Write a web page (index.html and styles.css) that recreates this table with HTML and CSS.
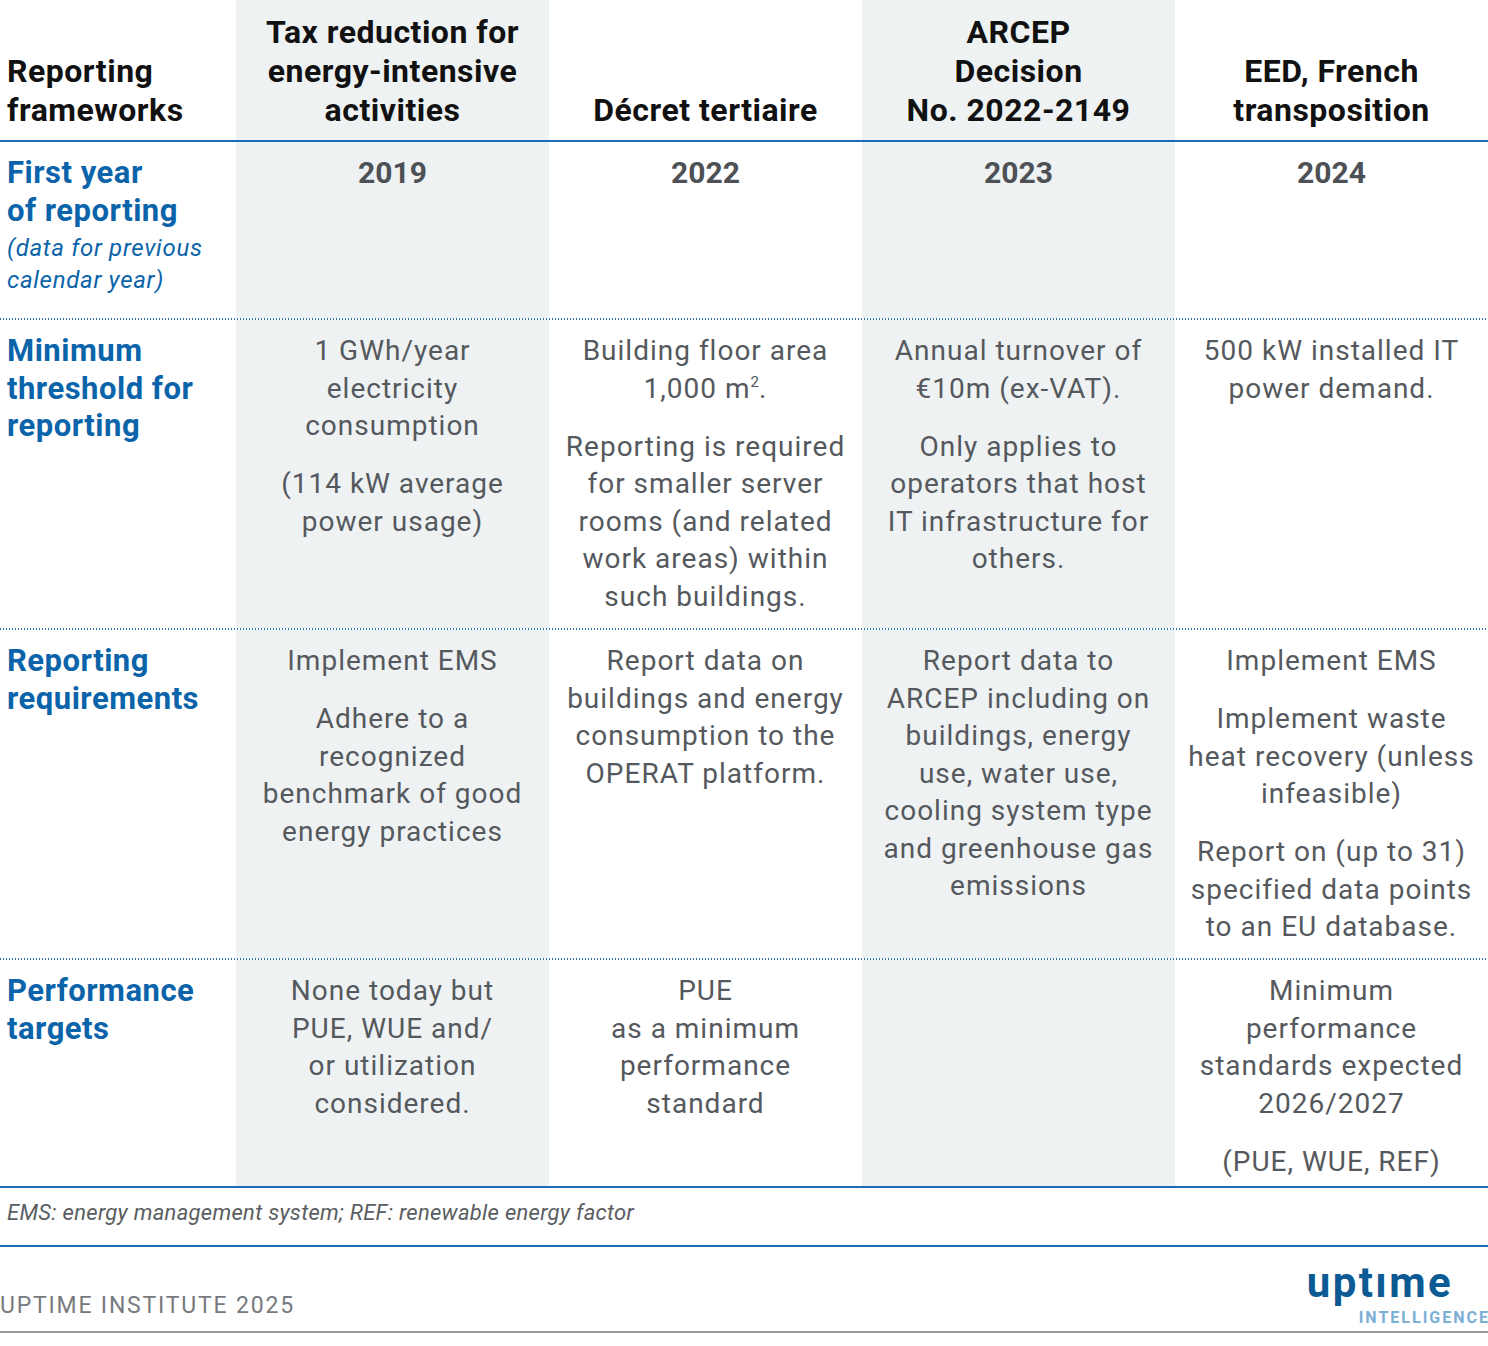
FILE: index.html
```html
<!DOCTYPE html>
<html lang="en">
<head>
<meta charset="utf-8">
<title>Reporting frameworks</title>
<link rel="stylesheet" href="styles.css">
</head>
<body>
<div class="page">
  <div class="row head">
    <div class="cell label-col"><div class="h">Reporting<br>frameworks</div></div>
    <div class="cell shade"><div class="h">Tax reduction for<br>energy-intensive<br>activities</div></div>
    <div class="cell"><div class="h">Décret tertiaire</div></div>
    <div class="cell shade"><div class="h">ARCEP<br>Decision<br>No. 2022-2149</div></div>
    <div class="cell"><div class="h">EED, French<br>transposition</div></div>
  </div>

  <div class="row r1">
    <div class="cell label-col">
      <div class="lbl">First year<br>of reporting</div>
      <div class="sub">(data for previous<br>calendar year)</div>
    </div>
    <div class="cell shade"><div class="yr">2019</div></div>
    <div class="cell"><div class="yr">2022</div></div>
    <div class="cell shade"><div class="yr">2023</div></div>
    <div class="cell"><div class="yr">2024</div></div>
  </div>
  <div class="sep"></div>

  <div class="row r2">
    <div class="cell label-col"><div class="lbl">Minimum<br>threshold for<br>reporting</div></div>
    <div class="cell shade">
      <p>1 GWh/year<br>electricity<br>consumption</p>
      <p>(114 kW average<br>power usage)</p>
    </div>
    <div class="cell">
      <p>Building floor area<br>1,000 m<sup>2</sup>.</p>
      <p>Reporting is required<br>for smaller server<br>rooms (and related<br>work areas) within<br>such buildings.</p>
    </div>
    <div class="cell shade">
      <p>Annual turnover of<br>€10m (ex-VAT).</p>
      <p>Only applies to<br>operators that host<br>IT infrastructure for<br>others.</p>
    </div>
    <div class="cell">
      <p>500 kW installed IT<br>power demand.</p>
    </div>
  </div>
  <div class="sep"></div>

  <div class="row r3">
    <div class="cell label-col"><div class="lbl">Reporting<br>requirements</div></div>
    <div class="cell shade">
      <p>Implement EMS</p>
      <p>Adhere to a<br>recognized<br>benchmark of good<br>energy practices</p>
    </div>
    <div class="cell">
      <p>Report data on<br>buildings and energy<br>consumption to the<br>OPERAT platform.</p>
    </div>
    <div class="cell shade">
      <p>Report data to<br>ARCEP including on<br>buildings, energy<br>use, water use,<br>cooling system type<br>and greenhouse gas<br>emissions</p>
    </div>
    <div class="cell">
      <p>Implement EMS</p>
      <p>Implement waste<br>heat recovery (unless<br>infeasible)</p>
      <p>Report on (up to 31)<br>specified data points<br>to an EU database.</p>
    </div>
  </div>
  <div class="sep"></div>

  <div class="row r4">
    <div class="cell label-col"><div class="lbl">Performance<br>targets</div></div>
    <div class="cell shade">
      <p>None today but<br>PUE, WUE and/<br>or utilization<br>considered.</p>
    </div>
    <div class="cell">
      <p>PUE<br>as a minimum<br>performance<br>standard</p>
    </div>
    <div class="cell shade"></div>
    <div class="cell">
      <p>Minimum<br>performance<br>standards expected<br>2026/2027</p>
      <p>(PUE, WUE, REF)</p>
    </div>
  </div>
  <div class="rule"></div>

  <div class="note">EMS: energy management system; REF: renewable energy factor</div>

  <div class="footer">
    <div class="credit">UPTIME INSTITUTE 2025</div>
    <div class="logo" aria-label="uptime intelligence">
      <div class="logo-main">uptıme</div>
      <div class="logo-sub">INTELLIGENCE</div>
    </div>
  </div>
</div>
</body>
</html>
```

FILE: styles.css
```css
* { box-sizing: border-box; }
html, body { margin: 0; padding: 0; background: #ffffff; }
body {
  font-family: Roboto, "Liberation Sans", sans-serif;
  color: #55595d;
}
.page {
  width: 1488px;
  display: flex;
  flex-direction: column;
}
.row {
  display: grid;
  grid-template-columns: 236px repeat(4, 313px);
  overflow: hidden;
}
.cell {
  text-align: center;
  padding: 12px 0 0;
  font-size: 28px;
  line-height: 37.5px;
  letter-spacing: 1px;
  white-space: nowrap;
}
.shade { background: #eef2f3; }
.label-col { text-align: left; padding-left: 7px; }
.head {
  height: 142px;
  border-bottom: 2px solid #1a6db3;
}
.head .cell {
  display: flex;
  flex-direction: column;
  justify-content: flex-end;
  padding-bottom: 10px;
}
.h {
  font-size: 32px;
  line-height: 39px;
  font-weight: 700;
  letter-spacing: 0.5px;
  color: #111111;
}
.r1 { height: 176px; }
.r2 { height: 308px; }
.r3 { height: 328px; }
.r4 { height: 226px; }
.rule { height: 2px; background: #1a6db3; }
.sep {
  height: 2px;
  background-image: repeating-linear-gradient(to right, #2a77bd 0 1.5px, transparent 1.5px 3px);
}
.lbl {
  font-size: 31px;
  line-height: 37.5px;
  font-weight: 700;
  letter-spacing: 0.5px;
  color: #0b64aa;
}
.sub {
  font-size: 24px;
  line-height: 32px;
  font-style: italic;
  letter-spacing: 0.7px;
  color: #0b64aa;
  margin-top: 3px;
}
.yr {
  font-size: 30px;
  font-weight: 700;
  letter-spacing: 0;
  color: #4d5054;
}
p { margin: 0 0 20.5px; }
p:last-child { margin-bottom: 0; }
sup { font-size: 15px; line-height: 0; vertical-align: 11px; letter-spacing: 0; }
.note {
  height: 59px;
  border-bottom: 2px solid #1a6db3;
  padding: 12px 0 0 7px;
  font-size: 22px;
  font-style: italic;
  color: #5a5d61;
  letter-spacing: 0.3px;
}
.footer {
  height: 86px;
  border-bottom: 2px solid #9a9a9a;
  display: flex;
  justify-content: space-between;
  align-items: flex-end;
  padding-bottom: 6px;
}
.credit {
  font-size: 23px;
  letter-spacing: 1.8px;
  color: #76797d;
  padding-bottom: 6px;
}
.logo {
  display: flex;
  flex-direction: column;
  align-items: flex-end;
}
.logo-main {
  font-family: Roboto, sans-serif;
  font-weight: 700;
  font-size: 42px;
  line-height: 42px;
  color: #0c5a94;
  letter-spacing: 2.4px;
  padding-right: 35px;
}
.logo-sub {
  font-family: Roboto, sans-serif;
  font-weight: 700;
  font-size: 16px;
  line-height: 14px;
  letter-spacing: 2px;
  color: #7bafd4;
  margin-right: -2px;
  margin-top: 7px;
}
```
